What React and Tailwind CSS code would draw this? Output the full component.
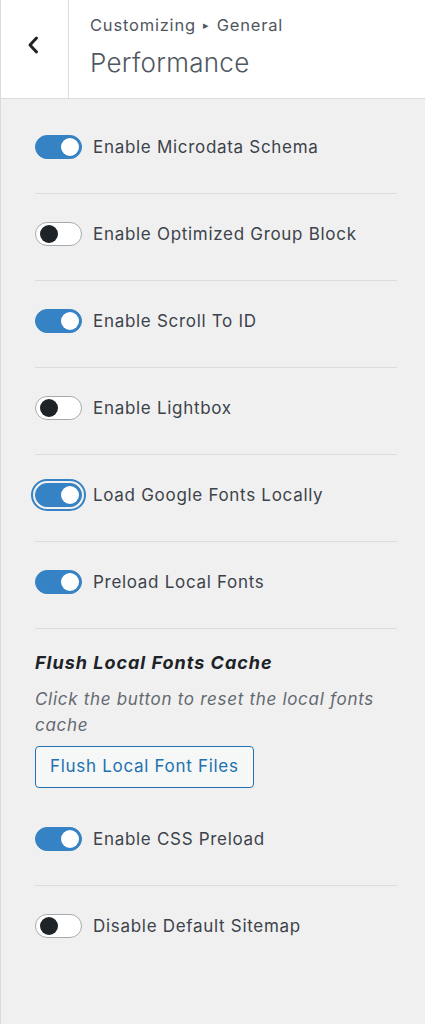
import React from "react";

function Toggle({ on, focused }) {
  const track = on
    ? "bg-[#3582c4] border-[#3582c4]"
    : "bg-white border-[#a7aaad]";
  const inner = (
    <span
      className={`relative flex items-center w-[47px] h-[24px] rounded-full border ${track}`}
    >
      <span
        className={`absolute top-1/2 -translate-y-1/2 w-[18px] h-[18px] rounded-full ${
          on ? "right-[2px] bg-white" : "left-[4px] bg-[#1d2327]"
        }`}
      />
    </span>
  );
  if (focused) {
    return (
      <span className="-m-[4px] p-[2px] rounded-full border-2 border-[#3582c4] flex">
        {inner}
      </span>
    );
  }
  return inner;
}

function Row({ label, on, focused, divider = true }) {
  return (
    <div>
      <div className="flex items-center gap-[11px] h-[24px]">
        <Toggle on={on} focused={focused} />
        <span className="text-[17px] tracking-[0.7px] text-[#3c434a] leading-[24px]">
          {label}
        </span>
      </div>
      {divider && <div className="mt-[34px] mb-[28px] h-px bg-[#dcdcde]" />}
    </div>
  );
}

export default function App() {
  return (
    <div
      className="w-[425px] min-h-[1024px] bg-[#f0f0f1] border-l border-[#dcdcde]"
      style={{ fontFamily: 'Inter, "Noto Sans", sans-serif' }}
    >
      <header className="flex h-[99px] bg-white border-b border-[#dcdcde]">
        <div className="w-[68px] border-r border-[#dcdcde] flex items-center justify-center pb-[8px] pr-[3px]">
          <svg width="14" height="20" viewBox="0 0 14 20" fill="none">
            <path
              d="M10.5 3 L4 10 L10.5 17"
              stroke="#1d2327"
              strokeWidth="3"
              strokeLinecap="round"
              strokeLinejoin="round"
            />
          </svg>
        </div>
        <div className="pl-[21px] pt-[13px]">
          <div className="text-[16.5px] tracking-[0.8px] leading-[24px] text-[#50575e] flex items-center">
            Customizing
            <span className="text-[11px] mx-[7px] text-[#50575e]">▸</span>
            General
          </div>
          <div className="text-[26px] tracking-[0.3px] leading-[36px] font-light text-[#50575e] mt-[8px]">
            Performance
          </div>
        </div>
      </header>

      <div className="pl-[34px] pr-[28px] pt-[36px]">
        <Row label="Enable Microdata Schema" on />
        <Row label="Enable Optimized Group Block" />
        <Row label="Enable Scroll To ID" on />
        <Row label="Enable Lightbox" />
        <Row label="Load Google Fonts Locally" on focused />
        <Row label="Preload Local Fonts" on />

        <div className="-mt-[6px]">
          <div className="text-[18px] tracking-[1px] leading-[24px] font-bold italic text-[#1d2327]">
            Flush Local Fonts Cache
          </div>
          <div className="mt-[11px] text-[17px] tracking-[0.7px] leading-[26px] italic text-[#646970]">
            Click the button to reset the local fonts cache
          </div>
          <button className="mt-[8px] h-[42px] px-[14px] rounded-[4px] border border-[#2271b1] bg-[#f6f7f7] text-[#2271b1] text-[17px] tracking-[0.7px]">
            Flush Local Font Files
          </button>
        </div>

        <div className="mt-[39px]">
          <Row label="Enable CSS Preload" on />
          <Row label="Disable Default Sitemap" divider={false} />
        </div>
      </div>
    </div>
  );
}
